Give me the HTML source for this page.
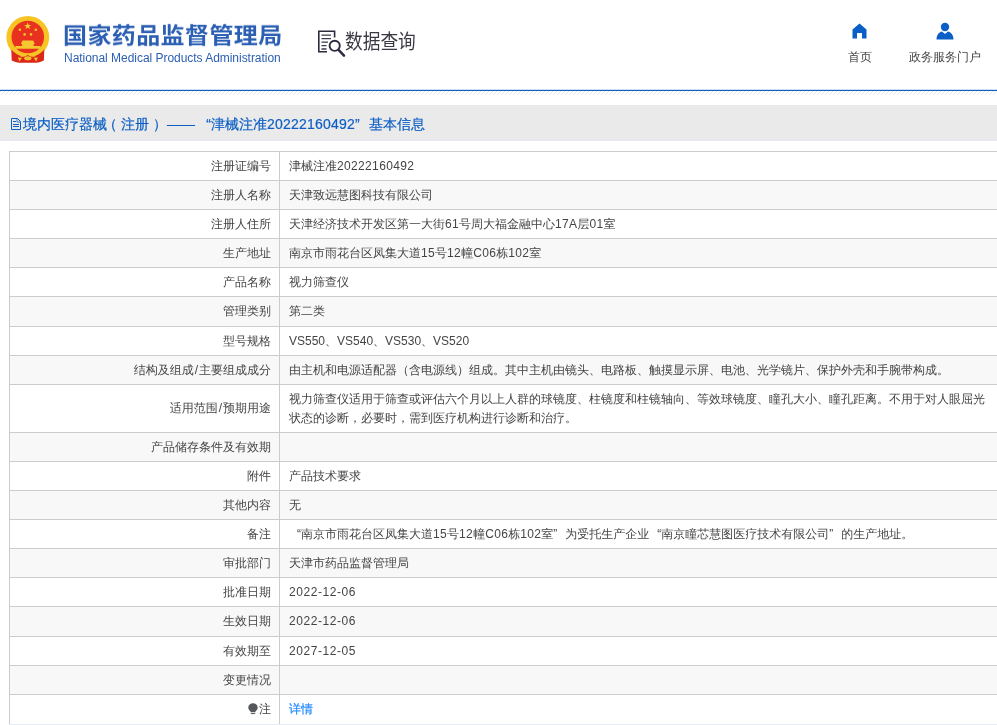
<!DOCTYPE html>
<html lang="zh-CN">
<head>
<meta charset="utf-8">
<title>国家药品监督管理局 数据查询</title>
<style>
html,body{margin:0;padding:0;background:#fff;}
body{width:997px;height:725px;overflow:hidden;position:relative;font-family:"Liberation Sans","WenQuanYi Zen Hei",sans-serif;font-size:12px;color:#444;}
.abs{position:absolute;}
#logo-cn{will-change:transform;left:63px;top:18.100px;font-family:"Liberation Sans","Noto Sans CJK SC",sans-serif;font-weight:bold;font-size:24px;line-height:36px;color:#2b5fb3;white-space:nowrap;letter-spacing:0.4px;transform:scaleY(0.93);transform-origin:0 17px;}
#logo-en{will-change:transform;left:64px;top:50.200px;font-family:"Liberation Sans",sans-serif;font-size:12px;line-height:16px;color:#2b5fb3;white-space:nowrap;letter-spacing:-0.035px;}
.nav{top:50px;font-size:12px;line-height:14px;color:#444;white-space:nowrap;text-align:center;}
#blueline{left:0;top:89px;width:997px;height:2px;background:linear-gradient(#cfe0f4 0,#cfe0f4 1px,#0b5fc0 1px,#0b5fc0 2px);}
#hatch{left:0;top:91px;width:997px;height:4px;background:repeating-linear-gradient(135deg,#e6e6e6 0,#e6e6e6 0.9px,#fff 0.9px,#fff 2.83px);}
#bar{left:0;top:105px;width:997px;height:35px;background:#eaeaea;border-bottom:1px solid #e6eaf6;}
#bartitle{will-change:transform;left:23px;top:114px;font-size:14px;line-height:20px;color:#0b5ec5;white-space:nowrap;-webkit-text-stroke:0.2px #0b5ec5;}
.sp{display:inline-block;width:4px;}.q{display:inline-block;}.dg{letter-spacing:0.214px;}.d{letter-spacing:0.35px;}.dt{letter-spacing:0.55px;}.sl{padding:0 1px;}
table{will-change:transform;position:absolute;left:9px;top:151px;width:1100px;border-collapse:collapse;table-layout:fixed;}
td{border:1px solid #ccc;height:28px;padding:0 8px 0 9px;line-height:19px;font-size:12px;color:#444;vertical-align:middle;}
td.l{width:252px;text-align:right;padding:0 8px 0 9px;}
tr:nth-child(even) td{background:#f8f8f8;}
tr.last td{border-bottom-color:#e6ebf6;}
a{color:#2a8dff;text-decoration:none;-webkit-text-stroke:0.25px #2a8dff;}
</style>
</head>
<body>
<!-- emblem -->
<svg class="abs" style="left:0;top:10px" width="60" height="60" viewBox="0 0 60 60">
  <circle cx="27.800" cy="27.300" r="21.400" fill="#f8c424"/>
  <circle cx="27.800" cy="27" r="16.300" fill="#e8311e"/>
  <path d="M11.300 39.500c2.600 2.700 5.600 5 9 6.300 2.500 0.900 5 0.200 7.500-1.600 2.500 1.800 5 2.500 7.500 1.600 3.400-1.300 6.400-3.600 9-6.300l-0.400 11c-2.500 1.300-5 2-7.600 2.200h-17c-2.600-0.200-5.100-0.900-7.600-2.200z" fill="#dc281b"/>
  <path d="M19.500 44.800c2.800 1.400 5.600 0.900 8.300-1.200 2.700 2.100 5.500 2.600 8.300 1.200l-0.800 1.500c-2.600 1-5 0.500-7.500-1.300-2.500 1.800-4.900 2.300-7.500 1.300z" fill="#f3c029"/>
  <ellipse cx="27.800" cy="48.300" rx="3.600" ry="2" fill="#f3c029"/>
  <path d="M17.800 47.500l4.200 0.200-2.600 3.700zM37.800 47.500l-4.200 0.200 2.600 3.700z" fill="#f3c029"/>
  <path d="M27.700 12.200l0.900 2.700h2.800l-2.300 1.700 0.900 2.700-2.300-1.700-2.300 1.700 0.900-2.700-2.300-1.700h2.800z" fill="#f8d030"/>
  <circle cx="19.900" cy="19.700" r="1.300" fill="#f5c52c"/><circle cx="35.800" cy="19.700" r="1.300" fill="#f5c52c"/>
  <circle cx="24.600" cy="24.400" r="1.300" fill="#f5c52c"/><circle cx="31" cy="24.400" r="1.300" fill="#f5c52c"/>
  <path d="M20.900 33.900l1.600-3.300h10.700l1.600 3.300h-1.200v2h-11.500v-2z" fill="#f6c830"/>
  <path d="M15.300 35.900h25.200v2.900h-25.200z" fill="#f6c830"/>
</svg>
<div id="logo-cn" class="abs">国家药品监督管理局</div>
<div id="logo-en" class="abs">National Medical Products Administration</div>
<!-- data query icon -->
<svg class="abs" style="left:316px;top:28px;will-change:transform" width="104" height="32" viewBox="0 0 104 32">
  <g fill="none" stroke="#2b2b40">
  <path d="M18.600 9.500V3.300H2.800V23.700H11" stroke-width="1.600"/>
  <path d="M5.500 7.200h9.500M5.500 10.700h9.500M5.500 14.200h6.500M5.500 17.700h5M5.500 21h5" stroke-width="1.300" stroke="#3a3a50"/>
  <circle cx="18.700" cy="17.800" r="5.100" stroke-width="1.900" fill="#fff"/>
  <path d="M22.800 22.200l5.200 5.400" stroke-width="2.500" stroke-linecap="round"/>
  </g>
  <text x="0" y="0" transform="translate(29,20.900) scale(0.885,1)" font-family="'Liberation Sans','Noto Sans CJK SC',sans-serif" font-size="20" fill="#3a3a44">数据查询</text>
</svg>
<!-- nav -->
<svg class="abs" style="left:852px;top:23px" width="15" height="16" viewBox="0 0 15 16"><path d="M7.500 0.500L14.500 6.500V15.500H10V10H5V15.500H0.500V6.500z" fill="#0a5fc6"/></svg>
<div class="abs nav" style="left:830px;width:60px;">首页</div>
<svg class="abs" style="left:936px;top:22px" width="18" height="18" viewBox="0 0 18 18"><circle cx="9" cy="5" r="4.200" fill="#0a5fc6"/><path d="M0.500 17.500c0-5 3-7.500 5.500-8l3 2.500 3-2.500c2.500 0.500 5.500 3 5.500 8z" fill="#0a5fc6"/></svg>
<div class="abs nav" style="left:895px;width:100px;">政务服务门户</div>
<div id="blueline" class="abs"></div>
<div id="hatch" class="abs"></div>
<div id="bar" class="abs"></div>
<svg class="abs" style="left:10px;top:117px" width="12" height="14" viewBox="0 0 12 14" fill="none" stroke="#0b5ec5" stroke-width="1"><path d="M1.500 1.500h6l3 3v8h-9z"/><path d="M7 1.500v3.500h3.500" stroke-width="0.800"/><path d="M3 4.500h3M3 7.500h6M3 9.500h6"/></svg>
<div id="bartitle" class="abs">境内医疗器械<span style="position:relative;left:-4px">（</span>注册<span style="position:relative;left:4px">）</span><span class="sp"></span>——<span class="sp"></span><span class="q" style="width:12px;text-align:right">“</span>津械注准<span class="dg">20222160492</span><span class="q" style="width:10px;text-align:left">”</span><span class="sp"></span>基本信息</div>
<table>
<tr><td class="l">注册证编号</td><td>津械注准<span class="d">20222160492</span></td></tr>
<tr><td class="l">注册人名称</td><td>天津致远慧图科技有限公司</td></tr>
<tr><td class="l">注册人住所</td><td>天津经济技术开发区第一大街<span class="d">61</span>号周大福金融中心<span class="d">17A</span>层<span class="d">01</span>室</td></tr>
<tr><td class="l">生产地址</td><td>南京市雨花台区凤集大道<span class="d">15</span>号<span class="d">12</span>幢<span class="d">C06</span>栋<span class="d">102</span>室</td></tr>
<tr><td class="l">产品名称</td><td>视力筛查仪</td></tr>
<tr><td class="l" style="height:29px">管理类别</td><td>第二类</td></tr>
<tr><td class="l">型号规格</td><td>VS550、VS540、VS530、VS520</td></tr>
<tr><td class="l">结构及组成<span class="sl">/</span>主要组成成分</td><td>由主机和电源适配器（含电源线）组成。其中主机由镜头、电路板、触摸显示屏、电池、光学镜片、保护外壳和手腕带构成。</td></tr>
<tr><td class="l">适用范围<span class="sl">/</span>预期用途</td><td style="height:47px">视力筛查仪适用于筛查或评估六个月以上人群的球镜度、柱镜度和柱镜轴向、等效球镜度、瞳孔大小、瞳孔距离。不用于对人眼屈光<br>状态的诊断，必要时，需到医疗机构进行诊断和治疗。</td></tr>
<tr><td class="l">产品储存条件及有效期</td><td></td></tr>
<tr><td class="l">附件</td><td>产品技术要求</td></tr>
<tr><td class="l">其他内容</td><td>无</td></tr>
<tr><td class="l">备注</td><td><span class="q" style="width:12px;text-align:right">“</span>南京市雨花台区凤集大道<span class="d">15</span>号<span class="d">12</span>幢<span class="d">C06</span>栋<span class="d">102</span>室<span class="q" style="width:8px;text-align:left">”</span><span class="sp"></span>为受托生产企业<span class="sp"></span><span class="q" style="width:8px;text-align:right">“</span>南京瞳芯慧图医疗技术有限公司<span class="q" style="width:8px;text-align:left">”</span><span class="sp"></span>的生产地址。</td></tr>
<tr><td class="l">审批部门</td><td>天津市药品监督管理局</td></tr>
<tr><td class="l">批准日期</td><td><span class="dt">2022-12-06</span></td></tr>
<tr><td class="l" style="height:29px">生效日期</td><td><span class="dt">2022-12-06</span></td></tr>
<tr><td class="l">有效期至</td><td><span class="dt">2027-12-05</span></td></tr>
<tr><td class="l">变更情况</td><td></td></tr>
<tr class="last"><td class="l" style="height:28px;padding-bottom:1px"><svg width="11" height="12" viewBox="0 0 11 12" style="vertical-align:-2px;margin-right:0px"><path d="M5 0.300C2.300 0.300 0.300 2.200 0.300 4.600c0 1.700 1 2.900 2.200 3.600V9.300h5V8.200c1.200-0.700 2.200-1.900 2.200-3.600C9.700 2.200 7.700 0.300 5 0.300z" fill="#55575c"/><path d="M2.800 10.600h4.400" stroke="#55575c" stroke-width="1"/></svg>注</td><td><a>详情</a></td></tr>
</table>
</body>
</html>
